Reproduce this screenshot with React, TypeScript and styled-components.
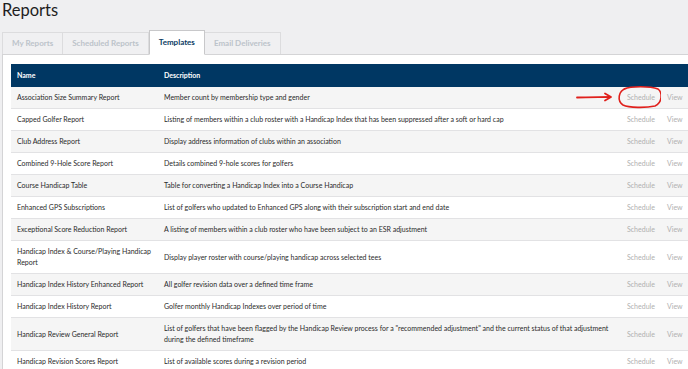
import React from 'react'
import styled, { createGlobalStyle } from 'styled-components'

const GlobalStyle = createGlobalStyle`
  html, body {
    margin: 0;
    padding: 0;
    background: #efeff1;
    font-family: Lato, "Liberation Sans", sans-serif;
    overflow: hidden;
  }
`

const Page = styled.div`
  padding: 0 0 0 2px;
  width: 686px;
`

const Title = styled.h1`
  margin: 0;
  height: 31px;
  font-size: 16.5px;
  font-weight: 400;
  line-height: 21px;
  color: #1e1e1e;
`

const TabBar = styled.div`
  display: flex;
  align-items: flex-end;
  height: 23px;
  border-bottom: 1px solid #d4d4d6;
`

const Tab = styled.div<{ $active?: boolean }>`
  padding: 0 9px;
  height: ${p => (p.$active ? '23px' : '21px')};
  line-height: ${p => (p.$active ? '23px' : '21px')};
  margin-bottom: ${p => (p.$active ? '-1px' : '0')};
  font-size: 8px;
  font-weight: 700;
  color: ${p => (p.$active ? '#0b3a63' : '#bcc3ca')};
  background: ${p => (p.$active ? '#fff' : '#f0f0f2')};
  border: 1px solid ${p => (p.$active ? '#c8c8ca' : '#dcdcde')};
  border-bottom: ${p => (p.$active ? '1px solid #fff' : 'none')};
  border-left-width: ${p => (p.$active ? '1px' : '0')};
  &:first-child {
    border-left-width: 1px;
  }
`

const Panel = styled.div`
  background: #fff;
  border-left: 1px solid #d4d4d6;
  padding: 9px 0 0 8px;
`

const Table = styled.div`
  display: grid;
  grid-template-columns: 147px 463px 40px 28px;
  font-size: 7px;
  color: #2a2a2a;
`

const HeadCell = styled.div`
  background: #003763;
  color: #fff;
  font-weight: 700;
  height: 23px;
  line-height: 23px;
  padding: 0 6px;
`

const Row = styled.div<{ $odd: boolean }>`
  display: contents;
  & > div {
    background: ${p => (p.$odd ? '#f5f5f5' : '#fff')};
  }
`

const Cell = styled.div`
  display: flex;
  align-items: center;
  padding: 5px 6px;
  line-height: 11px;
  min-height: 11px;
  border-bottom: 1px solid #e2e2e4;
`

const Action = styled(Cell)`
  color: #b0b0b0;
  padding: 5px 0 5px 6px;
  position: relative;
`

const Marker = styled.svg`
  position: absolute;
  left: -45px;
  top: 0px;
  overflow: visible;
  pointer-events: none;
`

const reports: [string, string][] = [
  ['Association Size Summary Report', 'Member count by membership type and gender'],
  ['Capped Golfer Report', 'Listing of members within a club roster with a Handicap Index that has been suppressed after a soft or hard cap'],
  ['Club Address Report', 'Display address information of clubs within an association'],
  ['Combined 9-Hole Score Report', 'Details combined 9-hole scores for golfers'],
  ['Course Handicap Table', 'Table for converting a Handicap Index into a Course Handicap'],
  ['Enhanced GPS Subscriptions', 'List of golfers who updated to Enhanced GPS along with their subscription start and end date'],
  ['Exceptional Score Reduction Report', 'A listing of members within a club roster who have been subject to an ESR adjustment'],
  ['Handicap Index & Course/Playing Handicap Report', 'Display player roster with course/playing handicap across selected tees'],
  ['Handicap Index History Enhanced Report', 'All golfer revision data over a defined time frame'],
  ['Handicap Index History Report', 'Golfer monthly Handicap Indexes over period of time'],
  ['Handicap Review General Report', 'List of golfers that have been flagged by the Handicap Review process for a "recommended adjustment" and the current status of that adjustment during the defined timeframe'],
  ['Handicap Revision Scores Report', 'List of available scores during a revision period'],
]

export default function App() {
  return (
    <Page>
      <GlobalStyle />
      <Title>Reports</Title>
      <TabBar>
        <Tab>My Reports</Tab>
        <Tab>Scheduled Reports</Tab>
        <Tab $active>Templates</Tab>
        <Tab>Email Deliveries</Tab>
      </TabBar>
      <Panel>
        <Table>
          <HeadCell>Name</HeadCell>
          <HeadCell>Description</HeadCell>
          <HeadCell />
          <HeadCell />
          {reports.map(([name, desc], i) => (
            <Row key={name} $odd={i % 2 === 0}>
              <Cell>{name}</Cell>
              <Cell>{desc}</Cell>
              <Action>
                Schedule
                {i === 0 && (
                  <Marker width="84" height="20" viewBox="0 0 84 20">
                    <path d="M1 10.5 C12 10 24 10.2 34 10" stroke="#e0201c" strokeWidth="1.8" fill="none" strokeLinecap="round" />
                    <path d="M29 6.5 L35 10 L29 13.5" stroke="#e0201c" strokeWidth="1.8" fill="none" strokeLinecap="round" strokeLinejoin="round" />
                    <path d="M48 2 C55 -1 74 -1 82 2 C87 6 86 16 79 19 C70 21 53 21 47 18 C41 14 42 4 50 1.5" stroke="#e0201c" strokeWidth="1.6" fill="none" strokeLinecap="round" />
                  </Marker>
                )}
              </Action>
              <Action>View</Action>
            </Row>
          ))}
        </Table>
      </Panel>
    </Page>
  )
}
